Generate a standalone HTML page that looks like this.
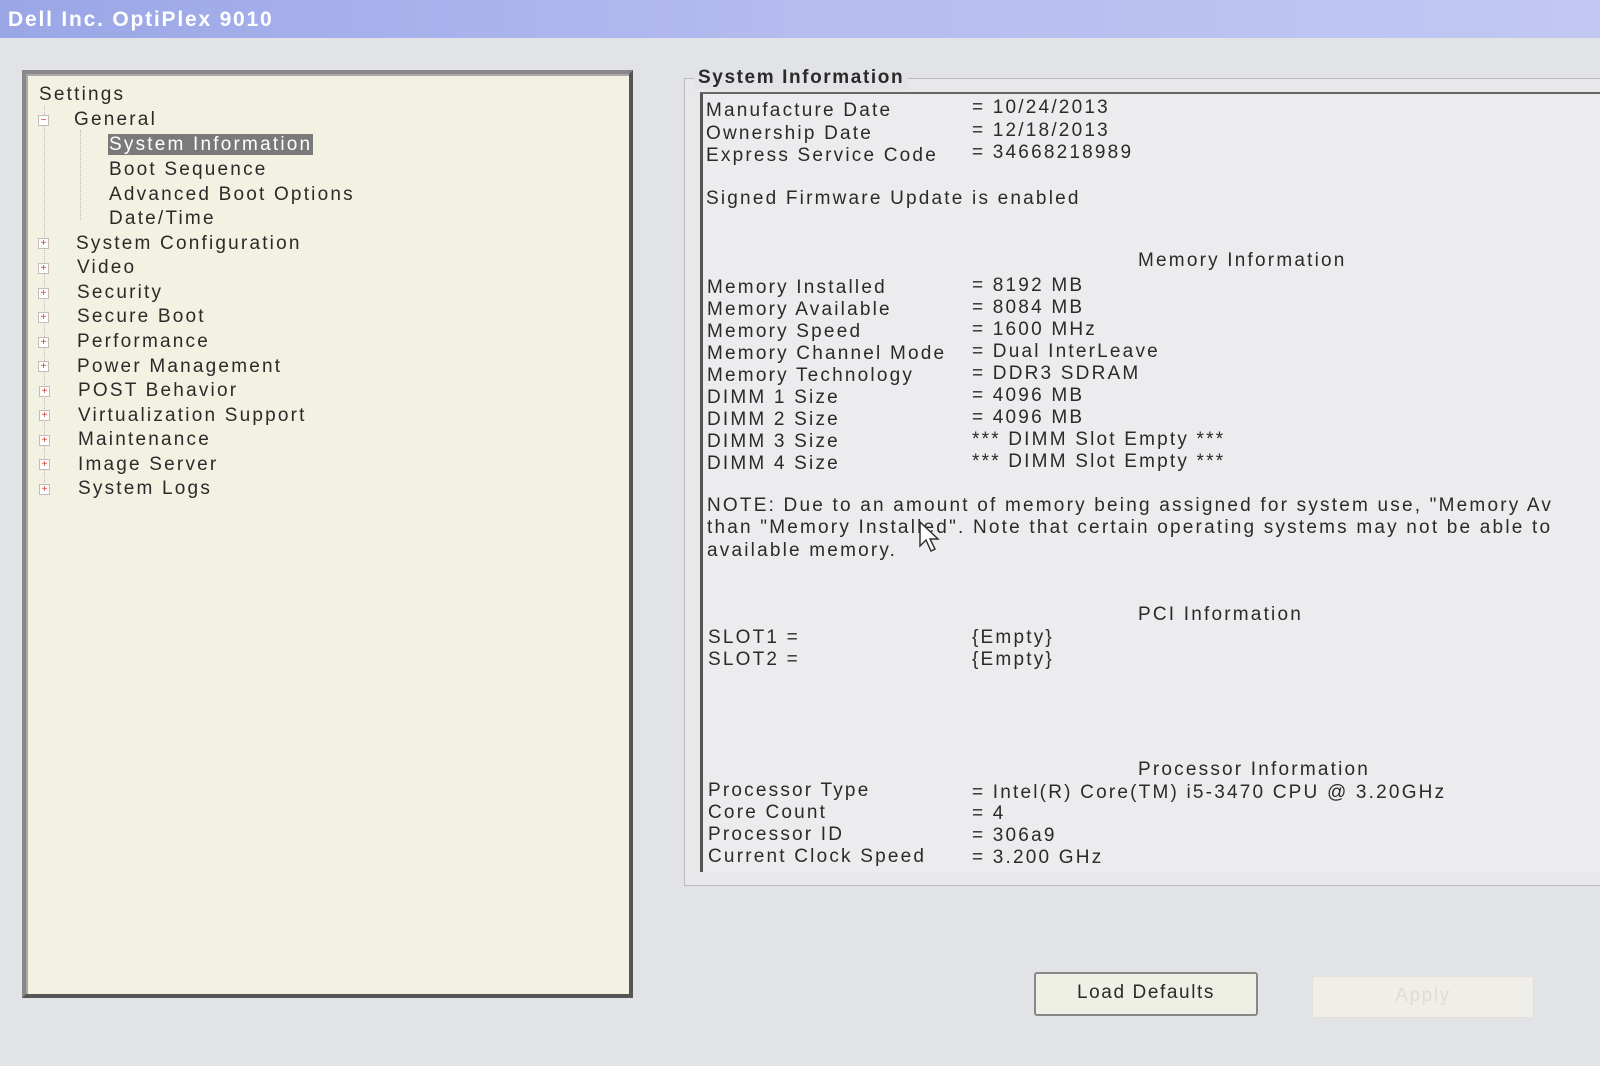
<!DOCTYPE html><html><head><style>
body{margin:0;width:1600px;height:1066px;overflow:hidden;background:#e2e3e6;font-family:"Liberation Sans",sans-serif;color:#2a2a2a;position:relative}
.t{position:absolute;font-size:19px;letter-spacing:2.2px;white-space:nowrap;line-height:22px}
#bar{position:absolute;left:0;top:0;width:1600px;height:38px;background:linear-gradient(90deg,#9aa6e6,#b4bcf0 50%,#c2c8f2)}
#bar span{position:absolute;left:8px;top:8px;color:#fff;font-weight:bold;font-size:21px;letter-spacing:1.8px}
#left{position:absolute;left:22px;top:70px;width:603px;height:920px;background:#f3f1e2;border:4px solid #555;border-left-color:#888;border-top-color:#888;box-shadow:inset 2px 2px 0 #aaa}
#right{position:absolute;left:684px;top:78px;width:930px;height:806px;border:1px solid #bbb;background:#e8e8ea}
#inner{position:absolute;left:700px;top:92px;width:910px;height:778px;border-left:3px solid #555;border-top:2px solid #666;background:#ececee}
.sel{background:#7a7a7a;color:#fff;padding:0 1px}
.pm{position:absolute;width:9px;height:9px;border:1px solid #c9b9b9;background:#fff;color:#d33;font-size:10px;line-height:9px;text-align:center}
.btn{position:absolute;top:972px;width:220px;height:40px;border:2px solid #888;border-radius:3px;background:#eef0e6;font-size:19px;letter-spacing:1.6px;text-align:center;line-height:38px}
</style></head><body>
<div id="bar"><span>Dell Inc. OptiPlex 9010</span></div>
<div id="left"></div>
<div style="position:absolute;left:44px;top:106px;height:385px;border-left:1px dotted #bbb"></div>
<div style="position:absolute;left:80px;top:130px;height:90px;border-left:1px dotted #bbb"></div>
<div class="t" style="left:39px;top:84px">Settings</div>
<div class="pm" style="left:38px;top:115px">−</div>
<div class="t" style="left:74px;top:109px">General</div>
<div class="t" style="left:108px;top:134px"><span class="sel">System Information</span></div>
<div class="t" style="left:109px;top:159px">Boot Sequence</div>
<div class="t" style="left:109px;top:184px">Advanced Boot Options</div>
<div class="t" style="left:109px;top:208px">Date/Time</div>
<div class="pm" style="left:38px;top:238px">+</div><div class="t" style="left:76px;top:233px">System Configuration</div>
<div class="pm" style="left:38px;top:263px">+</div><div class="t" style="left:77px;top:257px">Video</div>
<div class="pm" style="left:38px;top:288px">+</div><div class="t" style="left:77px;top:282px">Security</div>
<div class="pm" style="left:38px;top:312px">+</div><div class="t" style="left:77px;top:306px">Secure Boot</div>
<div class="pm" style="left:38px;top:337px">+</div><div class="t" style="left:77px;top:331px">Performance</div>
<div class="pm" style="left:38px;top:361px">+</div><div class="t" style="left:77px;top:356px">Power Management</div>
<div class="pm" style="left:39px;top:386px">+</div><div class="t" style="left:78px;top:380px">POST Behavior</div>
<div class="pm" style="left:39px;top:410px">+</div><div class="t" style="left:78px;top:405px">Virtualization Support</div>
<div class="pm" style="left:39px;top:435px">+</div><div class="t" style="left:78px;top:429px">Maintenance</div>
<div class="pm" style="left:39px;top:459px">+</div><div class="t" style="left:78px;top:454px">Image Server</div>
<div class="pm" style="left:39px;top:484px">+</div><div class="t" style="left:78px;top:478px">System Logs</div>

<div id="right"></div><div id="inner"></div>
<div class="t" style="left:694px;top:67px;font-weight:bold;background:#e2e3e6;padding:0 4px;letter-spacing:1.6px">System Information</div>
<div class="t" style="left:706px;top:100px">Manufacture Date</div><div class="t" style="left:972px;top:97px">= 10/24/2013</div>
<div class="t" style="left:706px;top:123px">Ownership Date</div><div class="t" style="left:972px;top:120px">= 12/18/2013</div>
<div class="t" style="left:706px;top:145px">Express Service Code</div><div class="t" style="left:972px;top:142px">= 34668218989</div>
<div class="t" style="left:706px;top:188px">Signed Firmware Update is enabled</div>
<div class="t" style="left:1138px;top:250px">Memory Information</div>
<div class="t" style="left:707px;top:277px">Memory Installed</div><div class="t" style="left:972px;top:275px">= 8192 MB</div>
<div class="t" style="left:707px;top:299px">Memory Available</div><div class="t" style="left:972px;top:297px">= 8084 MB</div>
<div class="t" style="left:707px;top:321px">Memory Speed</div><div class="t" style="left:972px;top:319px">= 1600 MHz</div>
<div class="t" style="left:707px;top:343px">Memory Channel Mode</div><div class="t" style="left:972px;top:341px">= Dual InterLeave</div>
<div class="t" style="left:707px;top:365px">Memory Technology</div><div class="t" style="left:972px;top:363px">= DDR3 SDRAM</div>
<div class="t" style="left:707px;top:387px">DIMM 1 Size</div><div class="t" style="left:972px;top:385px">= 4096 MB</div>
<div class="t" style="left:707px;top:409px">DIMM 2 Size</div><div class="t" style="left:972px;top:407px">= 4096 MB</div>
<div class="t" style="left:707px;top:431px">DIMM 3 Size</div><div class="t" style="left:972px;top:429px">*** DIMM Slot Empty ***</div>
<div class="t" style="left:707px;top:453px">DIMM 4 Size</div><div class="t" style="left:972px;top:451px">*** DIMM Slot Empty ***</div>
<div class="t" style="left:707px;top:495px">NOTE: Due to an amount of memory being assigned for system use, "Memory Av</div>
<div class="t" style="left:707px;top:517px">than "Memory Installed". Note that certain operating systems may not be able to</div>
<div class="t" style="left:707px;top:540px">available memory.</div>
<div class="t" style="left:1138px;top:604px">PCI Information</div>
<div class="t" style="left:708px;top:627px">SLOT1 =</div><div class="t" style="left:972px;top:627px">{Empty}</div>
<div class="t" style="left:708px;top:649px">SLOT2 =</div><div class="t" style="left:972px;top:649px">{Empty}</div>
<div class="t" style="left:1138px;top:759px">Processor Information</div>
<div class="t" style="left:708px;top:780px">Processor Type</div><div class="t" style="left:972px;top:782px">= Intel(R) Core(TM) i5-3470 CPU @ 3.20GHz</div>
<div class="t" style="left:708px;top:802px">Core Count</div><div class="t" style="left:972px;top:803px">= 4</div>
<div class="t" style="left:708px;top:824px">Processor ID</div><div class="t" style="left:972px;top:825px">= 306a9</div>
<div class="t" style="left:708px;top:846px">Current Clock Speed</div><div class="t" style="left:972px;top:847px">= 3.200 GHz</div>
<svg style="position:absolute;left:918px;top:520px" width="24" height="34"><path d="M2 2 L2 26 L8 20 L13 31 L17 29 L12 19 L20 19 Z" fill="#fff" stroke="#333" stroke-width="1.5"/></svg>
<div class="btn" style="left:1034px">Load Defaults</div>
<div class="btn" style="left:1312px;top:976px;border:1px solid #e6e0dc;background:#f0eee8;color:#e0dcd8">Apply</div>
</body></html>
